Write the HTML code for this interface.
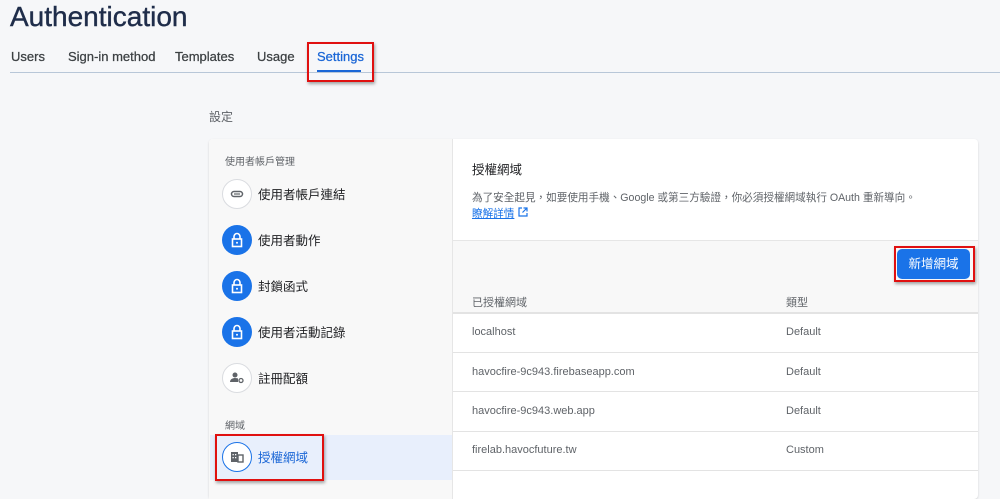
<!DOCTYPE html>
<html><head><meta charset="utf-8"><style>
*{margin:0;padding:0;box-sizing:border-box}
body{width:1000px;height:487px;overflow:hidden;background:#f6f7f9;font-family:"Liberation Sans","Noto Sans CJK TC",sans-serif;position:relative;color:#3c4043}
.a{position:absolute;white-space:nowrap}
.tab{position:absolute;top:49px;font-size:13px;color:#3c4043;-webkit-text-stroke:0.25px #3c4043}
.red{position:absolute;border:2px solid #e01010;box-shadow:1px 2px 3px rgba(0,0,0,.35)}
.ic{position:absolute;left:222px;width:30px;height:30px;border-radius:50%}
.lk{background:#1a73e8}
.wh{background:#fff;border:1px solid #dadce0}
.it{position:absolute;left:258px;font-size:12.5px;color:#202124}
.row{position:absolute;left:453px;width:525px;height:1px;background:#e3e3e3}
.c1{position:absolute;left:472px;font-size:11px;color:#5f6368}
.c2{position:absolute;left:786px;font-size:11px;color:#5f6368}
</style></head><body>
<div class="a" style="left:10px;top:1px;font-size:28px;color:#1f2d4a;-webkit-text-stroke:0.4px #1f2d4a">Authentication</div>
<div class="tab" style="left:11px">Users</div>
<div class="tab" style="left:68px">Sign-in method</div>
<div class="tab" style="left:175px">Templates</div>
<div class="tab" style="left:257px">Usage</div>
<div class="tab" style="left:317px;color:#1a66d6;-webkit-text-stroke:0.25px #1a66d6">Settings</div>
<div class="a" style="left:10px;top:72px;width:990px;height:1px;background:#b8c7d8"></div>
<div class="a" style="left:317px;top:70px;width:44px;height:2px;background:#1a66d6"></div>
<div class="red" style="left:307px;top:42px;width:67px;height:40px"></div>
<div class="a" style="left:209px;top:108px;font-size:12px;color:#5f6368">設定</div>

<div class="a" style="left:209px;top:139px;width:769px;height:360px;background:#fff;border-radius:4px;box-shadow:0 1px 2px rgba(0,0,0,.15)"></div>
<div class="a" style="left:209px;top:139px;width:244px;height:360px;background:#f8f8f8;border-right:1px solid #e6e6e6;border-radius:4px 0 0 0"></div>
<div class="a" style="left:225px;top:153px;font-size:10px;color:#5f6368">使用者帳戶管理</div>
<div class="ic wh" style="top:179px"><svg width="28" height="28" viewBox="0 0 28 28"><rect x="8.5" y="11.5" width="11" height="5" rx="2.5" fill="none" stroke="#5f6368" stroke-width="1.5"/><line x1="11" y1="14" x2="17" y2="14" stroke="#5f6368" stroke-width="1.2"/></svg></div>
<div class="it" style="top:184px">使用者帳戶連結</div>
<div class="ic lk" style="top:225px"><svg width="30" height="30" viewBox="0 0 30 30"><path d="M12 14v-2.5a3 3 0 0 1 6 0V14" fill="none" stroke="#fff" stroke-width="1.6"/><rect x="10.5" y="14" width="9" height="7.5" fill="none" stroke="#fff" stroke-width="1.6"/><circle cx="15" cy="17.7" r="1" fill="#fff"/></svg></div><div class="it" style="top:230px">使用者動作</div>
<div class="ic lk" style="top:271px"><svg width="30" height="30" viewBox="0 0 30 30"><path d="M12 14v-2.5a3 3 0 0 1 6 0V14" fill="none" stroke="#fff" stroke-width="1.6"/><rect x="10.5" y="14" width="9" height="7.5" fill="none" stroke="#fff" stroke-width="1.6"/><circle cx="15" cy="17.7" r="1" fill="#fff"/></svg></div><div class="it" style="top:276px">封鎖函式</div>
<div class="ic lk" style="top:317px"><svg width="30" height="30" viewBox="0 0 30 30"><path d="M12 14v-2.5a3 3 0 0 1 6 0V14" fill="none" stroke="#fff" stroke-width="1.6"/><rect x="10.5" y="14" width="9" height="7.5" fill="none" stroke="#fff" stroke-width="1.6"/><circle cx="15" cy="17.7" r="1" fill="#fff"/></svg></div><div class="it" style="top:322px">使用者活動記錄</div>
<div class="ic wh" style="top:363px"><svg width="28" height="28" viewBox="0 0 28 28"><circle cx="12" cy="11" r="2.5" fill="#5f6368"/><path d="M7 18c0-3 3-4 5-4s3 .5 3 .5V18z" fill="#5f6368"/><circle cx="18" cy="16.5" r="2" fill="none" stroke="#5f6368" stroke-width="1.3"/></svg></div>
<div class="it" style="top:368px">註冊配額</div>
<div class="a" style="left:225px;top:417px;font-size:10px;color:#5f6368">網域</div>
<div class="a" style="left:210px;top:435px;width:242px;height:45px;background:#e8effc"></div>
<div class="ic" style="top:442px;background:#fff;border:1px solid #1a73e8"><svg width="28" height="28" viewBox="0 0 28 28"><rect x="8" y="9" width="7" height="10" fill="#5f6368"/><rect x="15" y="12" width="5" height="7" fill="none" stroke="#5f6368" stroke-width="1.4"/><g fill="#fff"><rect x="9.5" y="11" width="1.3" height="1.3"/><rect x="12" y="11" width="1.3" height="1.3"/><rect x="9.5" y="14" width="1.3" height="1.3"/><rect x="12" y="14" width="1.3" height="1.3"/></g></svg></div>
<div class="it" style="top:447px;color:#1a66d6">授權網域</div>
<div class="red" style="left:215px;top:434px;width:109px;height:47px"></div>

<div class="a" style="left:472px;top:159px;font-size:12.5px;color:#202124">授權網域</div>
<div class="a" style="left:472px;top:190px;font-size:10.6px;color:#5f6368">為了安全起見，如要使用手機、Google 或第三方驗證，你必須授權網域執行 OAuth 重新導向。</div>
<div class="a" style="left:472px;top:206px;font-size:10.6px;color:#1a73e8;text-decoration:underline">瞭解詳情</div>
<svg class="a" style="left:518px;top:207px" width="10" height="10" viewBox="0 0 10 10"><path d="M4 1H1v8h8V6M5.5 1H9v3.5M9 1L4.5 5.5" fill="none" stroke="#1a73e8" stroke-width="1.2"/></svg>
<div class="a" style="left:453px;top:240px;width:525px;height:73px;background:#f8f8f8;border-top:1px solid #e6e6e6"></div>
<div class="a" style="left:897px;top:249px;width:73px;height:30px;background:#1a73e8;border-radius:5px;color:#fff;font-size:12.5px;text-align:center;line-height:30px">新增網域</div>
<div class="red" style="left:894px;top:246px;width:81px;height:36px"></div>
<div class="c1" style="top:294px">已授權網域</div><div class="c2" style="top:294px">類型</div>
<div class="row" style="top:312px;height:2px"></div>
<div class="c1" style="top:326px">localhost</div><div class="c2" style="top:326px">Default</div>
<div class="row" style="top:352px"></div>
<div class="c1" style="top:366px">havocfire-9c943.firebaseapp.com</div><div class="c2" style="top:366px">Default</div>
<div class="row" style="top:391px"></div>
<div class="c1" style="top:405px">havocfire-9c943.web.app</div><div class="c2" style="top:405px">Default</div>
<div class="row" style="top:431px"></div>
<div class="c1" style="top:444px">firelab.havocfuture.tw</div><div class="c2" style="top:444px">Custom</div>
<div class="row" style="top:470px"></div>
</body></html>
